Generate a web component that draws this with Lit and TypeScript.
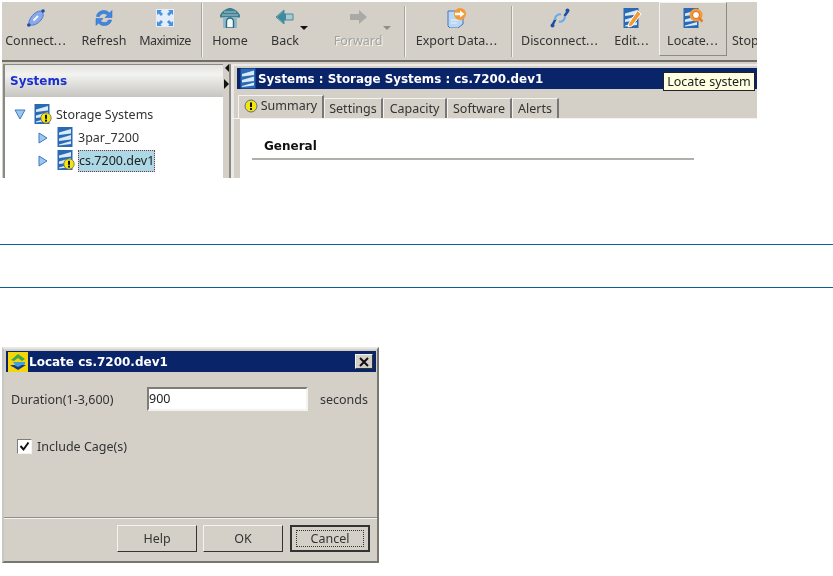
import { LitElement, html, css, svg } from "lit";
import { customElement } from "lit/decorators.js";

const stack = svg`<rect x="0.500" y="0" width="15" height="20" fill="#2a69b4"/><path d="M2 5.500 L14 2 V6.500 L2 8Z M2 11.500 L14 8 V12.500 L2 14Z M2 17.500 L14 14 V17 L2 18.500Z" fill="#d9e9f7"/>`;
const warn = svg`<circle cx="12" cy="14" r="5.200" fill="#f5e60a" stroke="#666" stroke-width=".8"/><rect x="11" y="10.800" width="2" height="4" fill="#111"/><rect x="11" y="15.600" width="2" height="2" fill="#111"/>`;
const warnSmall = svg`<circle cx="7" cy="7" r="6" fill="#f5e60a" stroke="#5f6a9a"/><rect x="6" y="3.500" width="2" height="4.500" fill="#111"/><rect x="6" y="9" width="2" height="2" fill="#111"/>`;
const icons: Record<string, unknown> = {
  connect: svg`<path d="M3 16 C2 11 9 3 14.500 3 C18 4 18 9 15 12 C12 16 7 18 4 17 Z" fill="#8aa8ea" stroke="#4f79cf"/><path d="M7.500 12.500 L12 8" stroke="#f2f5fc" stroke-width="2.200"/><circle cx="2.800" cy="17" r="1.800" fill="#1d4fa5"/><circle cx="17" cy="3" r="1.800" fill="#1d4fa5"/>`,
  refresh: svg`<path d="M2.500 8.500 C3 3 11 0 15.500 5 L18 2.500 V9.500 H11 L13.500 7 C10.500 4.500 7 5 5.500 8.500Z" fill="#3f88e2" stroke="#2a66bc" stroke-width=".5"/><path d="M17.500 12 C17 17 9 20 4.500 15 L2 17.500 V10.500 H9 L6.500 13 C9.500 15.500 13 15 14.500 12Z" fill="#3f88e2" stroke="#2a66bc" stroke-width=".5"/>`,
  maximize: svg`<rect x="1" y="1" width="18" height="18" fill="#e4eefa"/><path d="M2 2 H7 L5.500 3.500 L8 6 L6 8 L3.500 5.500 L2 7Z M18 2 H13 L14.500 3.500 L12 6 L14 8 L16.500 5.500 L18 7Z M2 18 H7 L5.500 16.500 L8 14 L6 12 L3.500 14.500 L2 13Z M18 18 H13 L14.500 16.500 L12 14 L14 12 L16.500 14.500 L18 13Z" fill="#4a93dc"/>`,
  home: svg`<path d="M0 7 C3 2 7 0 10 0 C13 0 17 2 20 7 V9.500 H0Z" fill="#3f7f8f"/><path d="M4 4 H16 M2 7 H18" stroke="#a5c8d0" stroke-width="1"/><path d="M3 9 H17 V20 H3Z" fill="#8fb8c8"/><path d="M6.500 20 V13.500 A3.500 3.500 0 0 1 13.500 13.500 V20Z" fill="#f4f8fa" stroke="#2a6a7a" stroke-width="1.400"/>`,
  back: svg`<path d="M1 9 L9 2 V6 H18 V12 H9 V16Z" fill="#a9ccd2" stroke="#4a8a9a"/><path d="M1.800 9 L9 2.800 V6 H11 V12 H9 V15.200Z" fill="#3f8a9d"/>`,
  forward: svg`<path d="M19 9 L11 2 V6 H2 V12 H11 V16Z" fill="#aaa9a5"/>`,
  export: svg`<path d="M1 3 H16 V16 L11 20 H3 L1 18Z" fill="#bcd6f2" stroke="#3f76c0"/><path d="M4 12 H12 M4 15 H10" stroke="#e8f2fb"/><circle cx="13" cy="6" r="6" fill="#f39a35"/><path d="M8 4.800 H13 V2.500 L17.500 6 L13 9.500 V7.200 H8Z" fill="#fff"/>`,
  disconnect: svg`<path d="M5.500 11 L2.500 17 M14.500 8 L18 3" stroke="#1d4fa5" stroke-width="2.500" fill="none"/><path d="M5 12 C5 7 9 6 11 6.500 M15 8 C15 13 11 14 9 13.500" fill="none" stroke="#66ace6" stroke-width="2"/><circle cx="2.500" cy="17.500" r="2" fill="#1d4fa5"/><circle cx="17.500" cy="2.500" r="2" fill="#1d4fa5"/>`,
  edit: svg`<g transform="translate(1,0)">${stack}</g><path d="M7 15 L6 19 L10 18 L19 6 L15.500 2.500Z" fill="#f39a35" stroke="#fff"/>`,
  locate: svg`${stack}<circle cx="13" cy="7" r="6.500" fill="#f39a35"/><circle cx="13" cy="7" r="3.500" fill="#fff" stroke="#d96a1c"/><path d="M16 10 L19.500 13.500" stroke="#e87c1c" stroke-width="2.500"/>`,
};

interface Tool { label: string; icon?: string; w: number; cls?: string; caret?: string }
const group1: Tool[] = [
  { label: "Connect...", icon: "connect", w: 68 },
  { label: "Refresh", icon: "refresh", w: 68 },
  { label: "Maximize", icon: "maximize", w: 54, cls: "tight" },
];
const group2: Tool[] = [
  { label: "Home", icon: "home", w: 54 },
  { label: "Back", icon: "back", w: 56, caret: "on" },
  { label: "Forward", icon: "forward", w: 90, cls: "dim", caret: "dim" },
];
const group4: Tool[] = [
  { label: "Disconnect...", icon: "disconnect", w: 94 },
  { label: "Edit...", icon: "edit", w: 50 },
];

@customElement("app-root")
export class AppRoot extends LitElement {
  static styles = css`
    :host { display: block; width: 833px; height: 576px; background: #fff; overflow: hidden; font-family: "Noto Sans", sans-serif; font-size: 12.500px; color: #333; }
    .shot { margin: 2px 0 0 2px; width: 755px; height: 176px; background: #d4d0c8; display: flex; flex-direction: column; overflow: hidden; position: relative; filter: blur(.4px); }
    .toolbar { height: 58px; display: flex; flex: none; border-bottom: 2px solid #6f6e69; }
    .tool { display: flex; flex-direction: column; align-items: center; padding-top: 6px; gap: 4px; white-space: nowrap; flex: none; height: 52px; position: relative; line-height: 17px; }
    .tool svg { width: 20px; height: 20px; display: block; flex: none; }
    .dots { letter-spacing: 1px; }
    .blank { width: 20px; height: 20px; flex: none; }
    .tool.tight span { letter-spacing: -.55px; }
    .tool.dim { color: #a3a29d; text-shadow: 1px 1px 0 #f4f3f0; }
    .tool.locate { box-sizing: border-box; height: 54px; width: 68px; margin-left: 2px; border: 1px solid; border-color: #f4f3f0 #8c8a85 #8c8a85 #f4f3f0; padding-top: 5px; }
    .tool.stop { align-items: flex-start; margin-left: 5px; }
    .caret { position: absolute; right: 5px; top: 24px; border: 4px solid transparent; border-top: 4px solid #111; border-bottom: 0; }
    .caret.dim { border-top-color: #8f8e89; right: 12px; }
    .sep { width: 1px; background: #a8a6a0; border-right: 1px solid #f4f3f0; margin: 4px 0 3px; flex: none; }
    .sep.one { margin: 1px 0 3px 9px; }
    .sep.two { margin-left: 1px; }
    .sep.three { margin-left: 3px; }
    .body { flex: 1; display: flex; padding: 2px 0 0 1px; min-height: 0; }
    .left { width: 220px; background: #fff; border-left: 2px solid #8b8984; border-top: 1px solid #8b8984; box-sizing: border-box; flex: none; }
    .lhead { height: 32px; background: linear-gradient(#e4e3df, #f2f2f0 30%, #c6c5c0); color: #1a2fd0; font-weight: bold; font-family: "DejaVu Sans", sans-serif; font-size: 12px; line-height: 32px; padding-left: 5px; }
    .tree { padding-top: 6px; }
    .row { display: flex; align-items: center; height: 23px; white-space: nowrap; }
    .tri { flex: none; display: block; }
    .tri.open { width: 12px; height: 11px; margin: 0 8px 0 9px; }
    .tri.closed { width: 10px; height: 12px; margin: 0 9px 0 33px; }
    .ic { width: 21px; height: 21px; flex: none; display: block; }
    .row.l0 .lab { margin-left: 1px; }
    .sel { background: #add8e6; outline: 1px dotted #7a3b3b; outline-offset: -1px; padding: 3px 1px; line-height: 16px; color: #222; }
    .split { width: 6px; flex: none; display: flex; flex-direction: column; align-items: flex-end; gap: 7px; }
    .split i { display: block; height: 0; width: 0; }
    .split .a { border: 4px solid transparent; border-right-color: #111; border-left: 0; }
    .split .b { border: 5px solid transparent; border-left-color: #111; border-right: 0; }
    .right { flex: 1; border-left: 2px solid #8b8984; box-shadow: inset 3px 2px 0 #eceae6; display: flex; flex-direction: column; min-width: 0; }
    .title { margin: 4px 0 0 6px; height: 21px; background: #0a246a; color: #fff; font-weight: bold; font-family: "DejaVu Sans", sans-serif; font-size: 11.900px; display: flex; align-items: center; gap: 1px; padding-left: 3px; flex: none; }
    .title svg { display: block; }
    .tabs { display: flex; height: 30px; padding: 6px 0 0 7px; box-sizing: border-box; flex: none; border-bottom: 1px solid #f4f3f0; align-items: flex-end; }
    .tab { display: flex; align-items: center; justify-content: center; gap: 3px; height: 20px; border-top: 1px solid #f4f3f0; border-left: 1px solid #f4f3f0; border-right: 2px solid #777; box-sizing: border-box; white-space: nowrap; }
    .tab.first { height: 23px; padding-bottom: 3px; }
    .content { margin-left: 9px; flex: 1; padding-top: 20px; font-weight: bold; font-family: "DejaVu Sans", sans-serif; font-size: 12px; line-height: 14px; color: #111; background: #fff; }
    .general { width: 430px; margin-left: 12px; padding: 0 0 5px 12px; border-bottom: 2px solid #b0afaa; }
    .tip { position: absolute; left: 661px; top: 70px; box-sizing: border-box; width: 92px; height: 19px; background: #ffffe1; border: 1px solid #222; line-height: 17px; text-align: center; white-space: nowrap; color: #222; }
    .note { margin-top: 66px; height: 42px; border-top: 1px solid #0f5f97; border-bottom: 1px solid #0f5f97; }
    .dlg { margin: 59px 0 0 2px; width: 377px; height: 216px; box-sizing: border-box; background: #d4d0c8; border: 2px solid #77766f; border-top-color: #e8e7e2; border-left-color: #c8c7c2; display: flex; flex-direction: column; filter: blur(.4px); }
    .dtitle { height: 21px; margin: 2px 1px 0 2px; background: #0a246a; color: #fff; font-weight: bold; font-family: "DejaVu Sans", sans-serif; font-size: 12px; display: flex; align-items: center; gap: 1px; padding-left: 2px; flex: none; }
    .dtitle svg { display: block; flex: none; }
    .x { margin-left: auto; margin-right: 3px; width: 18px; height: 15px; box-sizing: border-box; background: #d4d0c8; border: 1px solid; border-color: #f4f3f0 #333 #333 #f4f3f0; display: flex; align-items: center; justify-content: center; }
    .dmain { flex: 1; padding: 15px 0 0 7px; }
    .drow { display: flex; align-items: center; height: 24px; }
    .dur { width: 136px; flex: none; }
    .input { width: 161px; height: 24px; box-sizing: border-box; background: #fff; border: 2px solid; border-color: #7f7d78 #f4f3f0 #f4f3f0 #7f7d78; line-height: 20px; flex: none; color: #222; }
    .unit { margin-left: 12px; }
    .check { display: flex; align-items: center; gap: 5px; margin: 27px 0 0 6px; }
    .box { width: 15px; height: 15px; box-sizing: border-box; background: #fff; border: 1px solid; border-color: #7f7d78 #f4f3f0 #f4f3f0 #7f7d78; display: flex; align-items: center; justify-content: center; }
    .dfoot { height: 44px; flex: none; border-top: 1px solid #8f8e89; box-shadow: inset 0 1px 0 #f4f3f0; display: flex; justify-content: flex-end; align-items: flex-start; gap: 6px; padding: 7px 7px 0 0; box-sizing: border-box; }
    .btn { width: 80px; height: 27px; box-sizing: border-box; border: 1px solid; border-color: #f4f3f0 #333 #333 #f4f3f0; display: flex; align-items: center; justify-content: center; }
    .btn.focus { border: 2px solid #333; margin-left: 1px; }
    .btn.focus span { box-sizing: border-box; border: 1px dotted #333; width: 68px; height: 17px; line-height: 15px; text-align: center; }
  `;

  private label(text: string) {
    return text.endsWith("...")
      ? html`<span>${text.slice(0, -3)}<span class="dots">...</span></span>`
      : html`<span>${text}</span>`;
  }

  private tool(t: Tool) {
    return html`<div class="tool ${t.cls ?? ""}" style="width:${t.w}px">
      <svg viewBox="0 0 20 20">${icons[t.icon ?? ""]}</svg>${this.label(t.label)}
      ${t.caret ? html`<i class="caret ${t.caret === "dim" ? "dim" : ""}"></i>` : ""}
    </div>`;
  }

  private tri(open: boolean) {
    return open
      ? html`<svg class="tri open" viewBox="0 0 12 11"><path d="M1 1 H11 L6 10Z" fill="#9cc6f0" stroke="#3f78c0"/></svg>`
      : html`<svg class="tri closed" viewBox="0 0 10 12"><path d="M1 1 L9 6 L1 11Z" fill="#9cc6f0" stroke="#3f78c0"/></svg>`;
  }

  render() {
    return html`
      <div class="shot">
        <div class="toolbar">
          ${group1.map((t) => this.tool(t))}
          <div class="sep one"></div>
          ${group2.map((t) => this.tool(t))}
          <div class="sep two"></div>
          ${this.tool({ label: "Export Data...", icon: "export", w: 102 })}
          <div class="sep three"></div>
          ${group4.map((t) => this.tool(t))}
          <div class="tool locate"><svg viewBox="0 0 20 20">${icons.locate}</svg>${this.label("Locate...")}</div>
          <div class="tool stop"><div class="blank"></div><span>Stop</span></div>
        </div>
        <div class="body">
          <div class="left">
            <div class="lhead">Systems</div>
            <div class="tree">
              <div class="row l0">${this.tri(true)}<svg class="ic" viewBox="0 0 21 21">${stack}${warn}</svg><span class="lab">Storage Systems</span></div>
              <div class="row l1">${this.tri(false)}<svg class="ic" viewBox="0 0 21 21">${stack}</svg><span>3par_7200</span></div>
              <div class="row l1">${this.tri(false)}<svg class="ic" viewBox="0 0 21 21">${stack}${warn}</svg><span class="sel">cs.7200.dev1</span></div>
            </div>
          </div>
          <div class="split"><i class="a"></i><i class="b"></i></div>
          <div class="right">
            <div class="title"><svg width="17" height="21" viewBox="0 0 17 20">${stack}</svg>Systems : Storage Systems : cs.7200.dev1</div>
            <div class="tabs">
              <div class="tab first" style="width:86px"><svg width="14" height="14" viewBox="0 0 14 14">${warnSmall}</svg>Summary</div>
              <div class="tab" style="width:59px">Settings</div>
              <div class="tab" style="width:64px">Capacity</div>
              <div class="tab" style="width:65px">Software</div>
              <div class="tab" style="width:47px">Alerts</div>
            </div>
            <div class="content"><div class="general">General</div></div>
          </div>
        </div>
        <div class="tip">Locate system</div>
      </div>
      <div class="note"></div>
      <div class="dlg">
        <div class="dtitle">
          <svg width="20" height="20" viewBox="0 0 20 20"><rect width="20" height="20" fill="#f5d60a"/><path d="M3 8 L10 2 L17 7 L14 9 L10 6 L6 9Z" fill="#3fa84f"/><path d="M5 10 H17 V12 L13 15 H3 L7 12.500Z" fill="#3fa0e0"/><path d="M2 13 L10 18 L18 13 L14 13 L10 15 L6 13Z" fill="#1d3580"/></svg>
          Locate cs.7200.dev1
          <div class="x"><svg width="10" height="10" viewBox="0 0 10 10"><path d="M1 1 L9 9 M9 1 L1 9" stroke="#111" stroke-width="2"/></svg></div>
        </div>
        <div class="dmain">
          <div class="drow"><span class="dur">Duration(1-3,600)</span><div class="input">900</div><span class="unit">seconds</span></div>
          <div class="check"><div class="box"><svg width="11" height="11" viewBox="0 0 11 11"><path d="M1.500 5 L4.500 8.500 L9.500 1.500" stroke="#111" stroke-width="2" fill="none"/></svg></div>Include Cage(s)</div>
        </div>
        <div class="dfoot">
          <div class="btn">Help</div><div class="btn">OK</div><div class="btn focus"><span>Cancel</span></div>
        </div>
      </div>
    `;
  }
}
